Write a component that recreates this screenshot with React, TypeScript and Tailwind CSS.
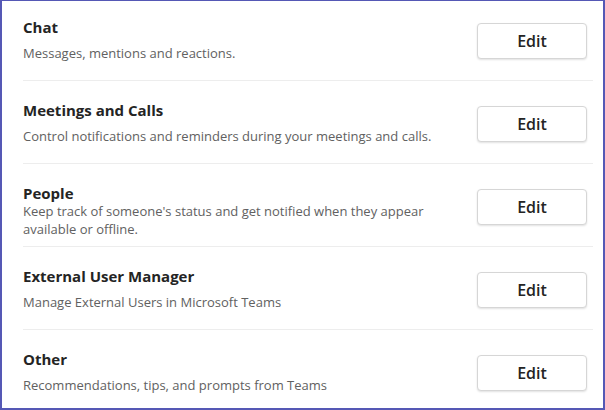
import React from "react";

const rows = [
  { title: "Chat", desc: "Messages, mentions and reactions." },
  {
    title: "Meetings and Calls",
    desc: "Control notifications and reminders during your meetings and calls.",
  },
  {
    title: "People",
    desc: "Keep track of someone's status and get notified when they appear available or offline.",
    tight: true,
  },
  { title: "External User Manager", desc: "Manage External Users in Microsoft Teams" },
  { title: "Other", desc: "Recommendations, tips, and prompts from Teams" },
];

export default function App() {
  return (
    <div
      className="w-[605px] h-[410px] overflow-hidden bg-white border-t border-l-2 border-r-2 border-b-2 border-[#5558b5] pl-[21px] pr-[10px]"
      style={{ fontFamily: "'Open Sans', 'Noto Sans', sans-serif" }}
    >
      <div className="-mt-[3px]">
        {rows.map((row, i) => (
          <div
            key={row.title}
            className={`flex justify-between h-[83px] shrink-0 ${
              i < rows.length - 1 ? "border-b border-[#ededed]" : ""
            }`}
          >
            <div className="pt-[20px]">
              <div className="text-[15px] leading-[18px] font-bold text-[#242424]">
                {row.title}
              </div>
              <p
                className={`text-[13px] leading-[18px] text-[#616161] max-w-[440px] ${
                  row.tight ? "mt-0" : "mt-[8px]"
                }`}
              >
                {row.desc}
              </p>
            </div>
            <button className="self-start mt-[25px] mr-[6px] w-[110px] h-[36px] shrink-0 rounded-[4px] border border-[#d6d6d6] bg-white shadow-[0_1px_2px_rgba(0,0,0,0.12)] text-[16px] font-semibold text-[#242424]">
              Edit
            </button>
          </div>
        ))}
      </div>
    </div>
  );
}
